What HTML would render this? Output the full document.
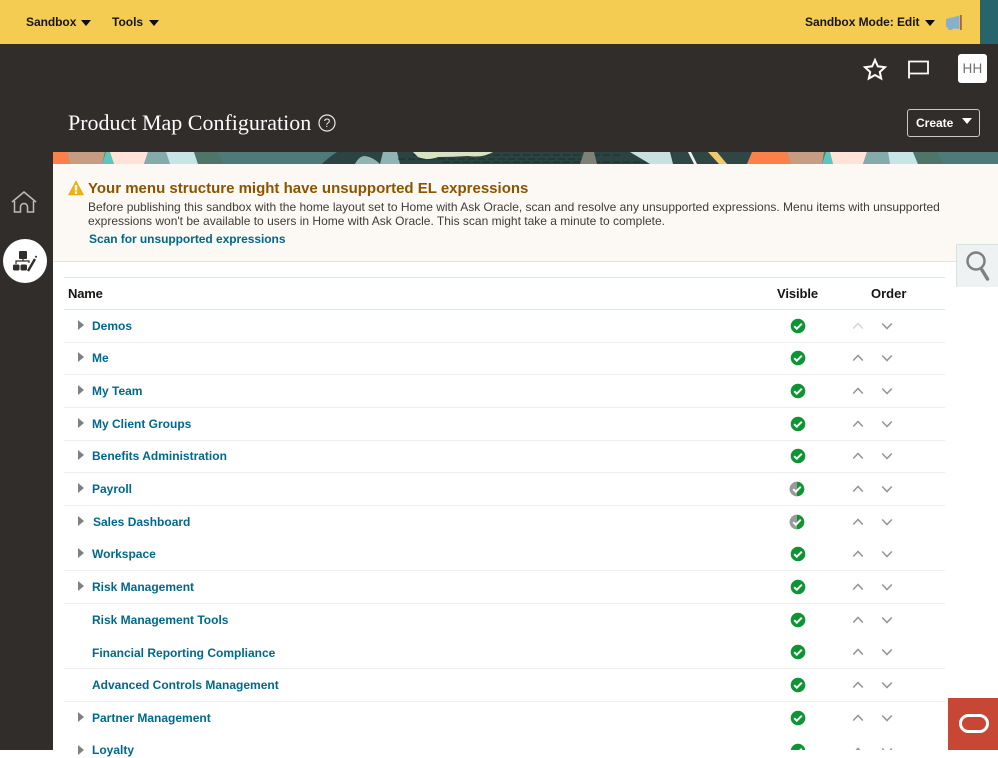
<!DOCTYPE html>
<html><head><meta charset="utf-8"><style>
html,body{margin:0;padding:0;background:#fff}
body{width:998px;height:750px;overflow:hidden;position:relative;font-family:"Liberation Sans",sans-serif}
.a{position:absolute;white-space:nowrap}
.b{font-weight:bold}
.lnk{position:absolute;left:92px;font:bold 12px/16px "Liberation Sans",sans-serif;color:#00688c;white-space:nowrap}
.sep{position:absolute;left:64px;width:881px;height:1px;background:#eeeeee}
.tw{position:absolute;left:78px;width:0;height:0;border-left:6px solid #808080;border-top:5px solid transparent;border-bottom:5px solid transparent}
svg{position:absolute;display:block}
</style></head><body>
<div class="a" style="left:0;top:0;width:998px;height:44px;background:#f5cc52"></div>
<div class="a" style="left:980px;top:0;width:18px;height:44px;background:#27646c"></div>
<div class="a" style="left:0;top:44px;width:998px;height:706px;background:#312d2a"></div>
<div class="a" style="left:53px;top:152px;width:945px;height:598px;background:#fff"></div>

<div class="a b" style="left:26px;top:14px;font-size:12px;line-height:16px;color:#161513;letter-spacing:-.05px">Sandbox</div>
<div class="a" style="left:81px;top:20px;border-left:5px solid transparent;border-right:5px solid transparent;border-top:6.500px solid #0a0a0a"></div>
<div class="a b" style="left:112px;top:14px;font-size:12px;line-height:16px;color:#161513">Tools</div>
<div class="a" style="left:149px;top:20px;border-left:5px solid transparent;border-right:5px solid transparent;border-top:6.500px solid #0a0a0a"></div>
<div class="a b" style="left:805px;top:14px;font-size:12px;line-height:16px;color:#161513;letter-spacing:-.05px">Sandbox Mode: Edit</div>
<div class="a" style="left:925px;top:20px;border-left:5px solid transparent;border-right:5px solid transparent;border-top:6.500px solid #0a0a0a"></div>
<svg style="left:945px;top:14px" width="18" height="17" viewBox="0 0 18 17"><path d="M1 5 L14.500 1.500 V15 L8 14.500 L7 16 L3.500 16 L2.500 13.500 L1 13 Z" fill="#86b1ce"/><rect x="15" y="1" width="1.800" height="15" fill="#b5602e"/></svg>

<svg style="left:862px;top:57px" width="26" height="24" viewBox="0 0 26 24"><path d="M13 3 L15.800 9.300 L23 10.200 L17.800 15 L19.200 21.500 L13 18 L6.800 21.500 L8.200 15 L3 10.200 L10.200 9.300 Z" fill="none" stroke="#fff" stroke-width="2"/></svg>
<svg style="left:906px;top:58px" width="24" height="22" viewBox="0 0 24 22"><path d="M3 20.500 V3.500 H22 V15.500 H3" fill="none" stroke="#fff" stroke-width="1.800"/></svg>
<div class="a" style="left:958px;top:54px;width:29px;height:29px;background:#fff;border-radius:3px;text-align:center;font-size:13.500px;line-height:30px;color:#6f6f6f;letter-spacing:.3px">HH</div>

<div class="a" style="left:68px;top:111px;font:22px/24px 'Liberation Serif',serif;color:#fcfbfa">Product Map Configuration</div>
<svg style="left:318px;top:114px" width="18" height="18" viewBox="0 0 18 18"><circle cx="9" cy="9" r="8" fill="none" stroke="#e8e8e8" stroke-width="1.200"/><text x="9" y="13.200" text-anchor="middle" font-family="Liberation Sans" font-size="12" fill="#e8e8e8">?</text></svg>
<div class="a" style="left:907px;top:109px;width:71px;height:26px;border:1px solid #c9c8c6;border-radius:3px"></div>
<div class="a b" style="left:916px;top:115px;font-size:12px;line-height:16px;color:#fff">Create</div>
<div class="a" style="left:962px;top:118px;border-left:5px solid transparent;border-right:5px solid transparent;border-top:6px solid #fff"></div>

<svg style="left:53px;top:152px" width="945" height="12" viewBox="0 0 945 12">
<rect width="945" height="12" fill="#4f7a78"/>
<path d="M0 0H14L17 12H0Z" fill="#fc8049"/>
<path d="M14 0H52L49 12H17Z" fill="#c69c82"/>
<path d="M53 0H57L61 12H49Z" fill="#5fc4bc"/>
<path d="M57 0H95L91 12H61Z" fill="#ffe3d8"/>
<path d="M95 0H113L117 12H91Z" fill="#85aaaa"/>
<path d="M113 0H141L145 12H117Z" fill="#c6e5e4"/>
<path d="M141 0H165L170 12H145Z" fill="#4f756b"/>
<path d="M269 12 Q276 5 284 0 H620 L625 12Z" fill="#2b4442"/>
<path d="M302 12 Q306 4 312 4 Q320 5 327 12Z" fill="#8fb4b3"/>
<path d="M330 0 H344 L347 12 H327Z" fill="#8fb4b3"/>
<path d="M360 3 H570 M345 7 H530 M390 10 H600" stroke="#1d2b2a" stroke-width="1" stroke-dasharray="7 3" fill="none"/>
<path d="M360 0 H440 Q430 6 415 4 Q400 5 385 5 Q375 9 365 5Z" fill="#d5e5c4"/>
<path d="M531 0 H541 L544 12 H527Z" fill="#7e8175"/>
<path d="M577 0 H617 L620 12 H597Z" fill="#c9dfe0"/>
<path d="M620 0 H699 L694 12 H620Z" fill="#2f4644"/>
<path d="M635 0 H638 L644 12 H641Z" fill="#f2f2f2"/>
<path d="M655 0 H664 L674 12 H666Z" fill="#f0c96b"/>
<path d="M699 0 H734 L738 12 H694Z" fill="#fc8049"/>
<path d="M734 0 H771 L769 12 H738Z" fill="#c69c82"/>
<path d="M773 0 H777 L780 12 H769Z" fill="#5fc4bc"/>
<path d="M777 0 H814 L810 12 H780Z" fill="#ffe3d8"/>
<path d="M814 0 H835 L837 12 H810Z" fill="#85aaaa"/>
<path d="M835 0 H860 L865 12 H837Z" fill="#c6e5e4"/>
<path d="M860 0 H884 L890 12 H865Z" fill="#4f756b"/>
</svg>

<div class="a" style="left:53px;top:164px;width:945px;height:97px;background:#fcf8f3"></div>
<div class="a" style="left:53px;top:261px;width:945px;height:1px;background:#e6e4e1"></div>
<svg style="left:68px;top:180px" width="16" height="16" viewBox="0 0 16 16"><path d="M8 1 L15.500 15 H0.500Z" fill="#f0b00e" stroke="#e0a000" stroke-width=".6" stroke-linejoin="round"/><rect x="6.800" y="5" width="2.400" height="5.500" fill="#fff"/><rect x="6.800" y="11.500" width="2.400" height="2.400" fill="#fff"/></svg>
<div class="a b" style="left:88px;top:180px;font-size:15px;line-height:18px;color:#8d5400">Your menu structure might have unsupported EL expressions</div>
<div class="a" style="left:88px;top:200px;font-size:12px;line-height:14px;color:#3f3b38">Before publishing this sandbox with the home layout set to Home with Ask Oracle, scan and resolve any unsupported expressions. Menu items with unsupported</div>
<div class="a" style="left:88px;top:214px;font-size:12px;line-height:14px;color:#3f3b38">expressions won't be available to users in Home with Ask Oracle. This scan might take a minute to complete.</div>
<div class="a b" style="left:89px;top:231px;font-size:12px;line-height:16px;color:#00688c;letter-spacing:-.05px">Scan for unsupported expressions</div>

<svg style="left:10px;top:189px" width="28" height="26" viewBox="0 0 28 26"><path d="M2 13 L14 3 L26 13 M4.500 12 V23 H10.500 V18 A3.500 3.500 0 0 1 17.500 18 V23 H23.500 V12" fill="none" stroke="#bdbcba" stroke-width="1.500"/></svg>
<div class="a" style="left:3px;top:239px;width:44px;height:44px;border-radius:50%;background:#fff"></div>
<svg style="left:12px;top:251px" width="26" height="22" viewBox="0 0 26 22"><rect x="7" y="0" width="8" height="8" rx="1" fill="#312d2a"/><path d="M11 8 V10 M4 13 V10 H17 V12" fill="none" stroke="#312d2a" stroke-width="1.200"/><rect x="1" y="13.500" width="6.500" height="6" rx="1.500" fill="#312d2a"/><rect x="8.500" y="13.500" width="6.500" height="6" rx="1.500" fill="#312d2a"/><path d="M16 20 L23 8" stroke="#312d2a" stroke-width="2.400"/><path d="M23.500 6.500 L24.500 5" stroke="#312d2a" stroke-width="1.800"/></svg>

<div class="a" style="left:956px;top:244px;width:42px;height:43px;background:#eff2f2;border-left:1px solid #d8e2e2;border-top:1px solid #d8e2e2;box-sizing:border-box"></div>
<svg style="left:964px;top:250px" width="30" height="34" viewBox="0 0 30 34"><circle cx="12" cy="11" r="8.500" fill="none" stroke="#808080" stroke-width="2.500"/><path d="M18 20 L23.500 29" stroke="#808080" stroke-width="3.500" stroke-linecap="round"/></svg>

<div class="a" style="left:64px;top:277px;width:881px;height:1px;background:#dfe4e4"></div>
<div class="a b" style="left:68px;top:286px;font-size:13px;line-height:16px;color:#161513;letter-spacing:-.2px">Name</div>
<div class="a b" style="left:777px;top:286px;font-size:13px;line-height:16px;color:#161513;letter-spacing:-.1px">Visible</div>
<div class="a b" style="left:871px;top:286px;font-size:13px;line-height:16px;color:#161513">Order</div>
<div class="a" style="left:64px;top:309px;width:881px;height:1px;background:#dfe4e4"></div>

<div class="sep" style="top:342px"></div><div class="sep" style="top:374px"></div><div class="sep" style="top:407px"></div><div class="sep" style="top:440px"></div><div class="sep" style="top:472px"></div><div class="sep" style="top:505px"></div><div class="sep" style="top:570px"></div><div class="sep" style="top:603px"></div><div class="sep" style="top:668px"></div><div class="sep" style="top:701px"></div>

<div class="tw" style="top:320px"></div><div class="lnk" style="top:318px">Demos</div>
<div class="tw" style="top:352px"></div><div class="lnk" style="top:350px">Me</div>
<div class="tw" style="top:385px"></div><div class="lnk" style="top:383px">My Team</div>
<div class="tw" style="top:418px"></div><div class="lnk" style="top:416px">My Client Groups</div>
<div class="tw" style="top:450px"></div><div class="lnk" style="top:448px">Benefits Administration</div>
<div class="tw" style="top:483px"></div><div class="lnk" style="top:481px">Payroll</div>
<div class="tw" style="top:516px"></div><div class="lnk" style="top:514px;left:93px">Sales Dashboard</div>
<div class="tw" style="top:548px"></div><div class="lnk" style="top:546px">Workspace</div>
<div class="tw" style="top:581px"></div><div class="lnk" style="top:579px">Risk Management</div>
<div class="lnk" style="top:612px">Risk Management Tools</div>
<div class="lnk" style="top:645px">Financial Reporting Compliance</div>
<div class="lnk" style="top:677px">Advanced Controls Management</div>
<div class="tw" style="top:712px"></div><div class="lnk" style="top:710px">Partner Management</div>
<div class="tw" style="top:745px"></div><div class="lnk" style="top:742px">Loyalty</div>

<svg style="left:0;top:0" width="998" height="750" viewBox="0 0 998 750">
<defs>
<g id="ok"><circle r="7.300" fill="#0d9433"/><path d="M-3.800 .2 L-1.200 2.700 L3.800 -2.300" fill="none" stroke="#fff" stroke-width="2"/></g>
<g id="pa"><circle r="7.300" fill="#0d9433"/><path d="M0 -7.300 A7.300 7.300 0 0 0 0 7.300Z" fill="#9a9a9a"/><path d="M-3.800 .2 L-1.200 2.700 L3.800 -2.300" fill="none" stroke="#fff" stroke-width="2"/></g>
<path id="up" d="M-4.800 2.500 L0 -2.500 L4.800 2.500" fill="none" stroke="#939393" stroke-width="1.500"/>
<path id="dn" d="M-4.800 -2.500 L0 2.500 L4.800 -2.500" fill="none" stroke="#939393" stroke-width="1.500"/>
</defs>
<use href="#ok" x="798" y="326"/><use href="#up" x="858" y="326" opacity=".4"/><use href="#dn" x="887" y="326"/>
<use href="#ok" x="798" y="358"/><use href="#up" x="858" y="358"/><use href="#dn" x="887" y="358"/>
<use href="#ok" x="798" y="391"/><use href="#up" x="858" y="391"/><use href="#dn" x="887" y="391"/>
<use href="#ok" x="798" y="424"/><use href="#up" x="858" y="424"/><use href="#dn" x="887" y="424"/>
<use href="#ok" x="798" y="456"/><use href="#up" x="858" y="456"/><use href="#dn" x="887" y="456"/>
<use href="#pa" x="797" y="489"/><use href="#up" x="858" y="489"/><use href="#dn" x="887" y="489"/>
<use href="#pa" x="797" y="522"/><use href="#up" x="858" y="522"/><use href="#dn" x="887" y="522"/>
<use href="#ok" x="798" y="554"/><use href="#up" x="858" y="554"/><use href="#dn" x="887" y="554"/>
<use href="#ok" x="798" y="587"/><use href="#up" x="858" y="587"/><use href="#dn" x="887" y="587"/>
<use href="#ok" x="798" y="620"/><use href="#up" x="858" y="620"/><use href="#dn" x="887" y="620"/>
<use href="#ok" x="798" y="652"/><use href="#up" x="858" y="652"/><use href="#dn" x="887" y="652"/>
<use href="#ok" x="798" y="685"/><use href="#up" x="858" y="685"/><use href="#dn" x="887" y="685"/>
<use href="#ok" x="798" y="718"/><use href="#up" x="858" y="718"/><use href="#dn" x="887" y="718"/>
<use href="#ok" x="798" y="751"/><use href="#up" x="858" y="751"/><use href="#dn" x="887" y="751"/>
</svg>

<div class="a" style="left:948px;top:698px;width:50px;height:52px;background:#c74634"></div>
<div class="a" style="left:959px;top:714px;width:24px;height:13px;border:3px solid #fff;border-radius:9.500px"></div>
</body></html>
